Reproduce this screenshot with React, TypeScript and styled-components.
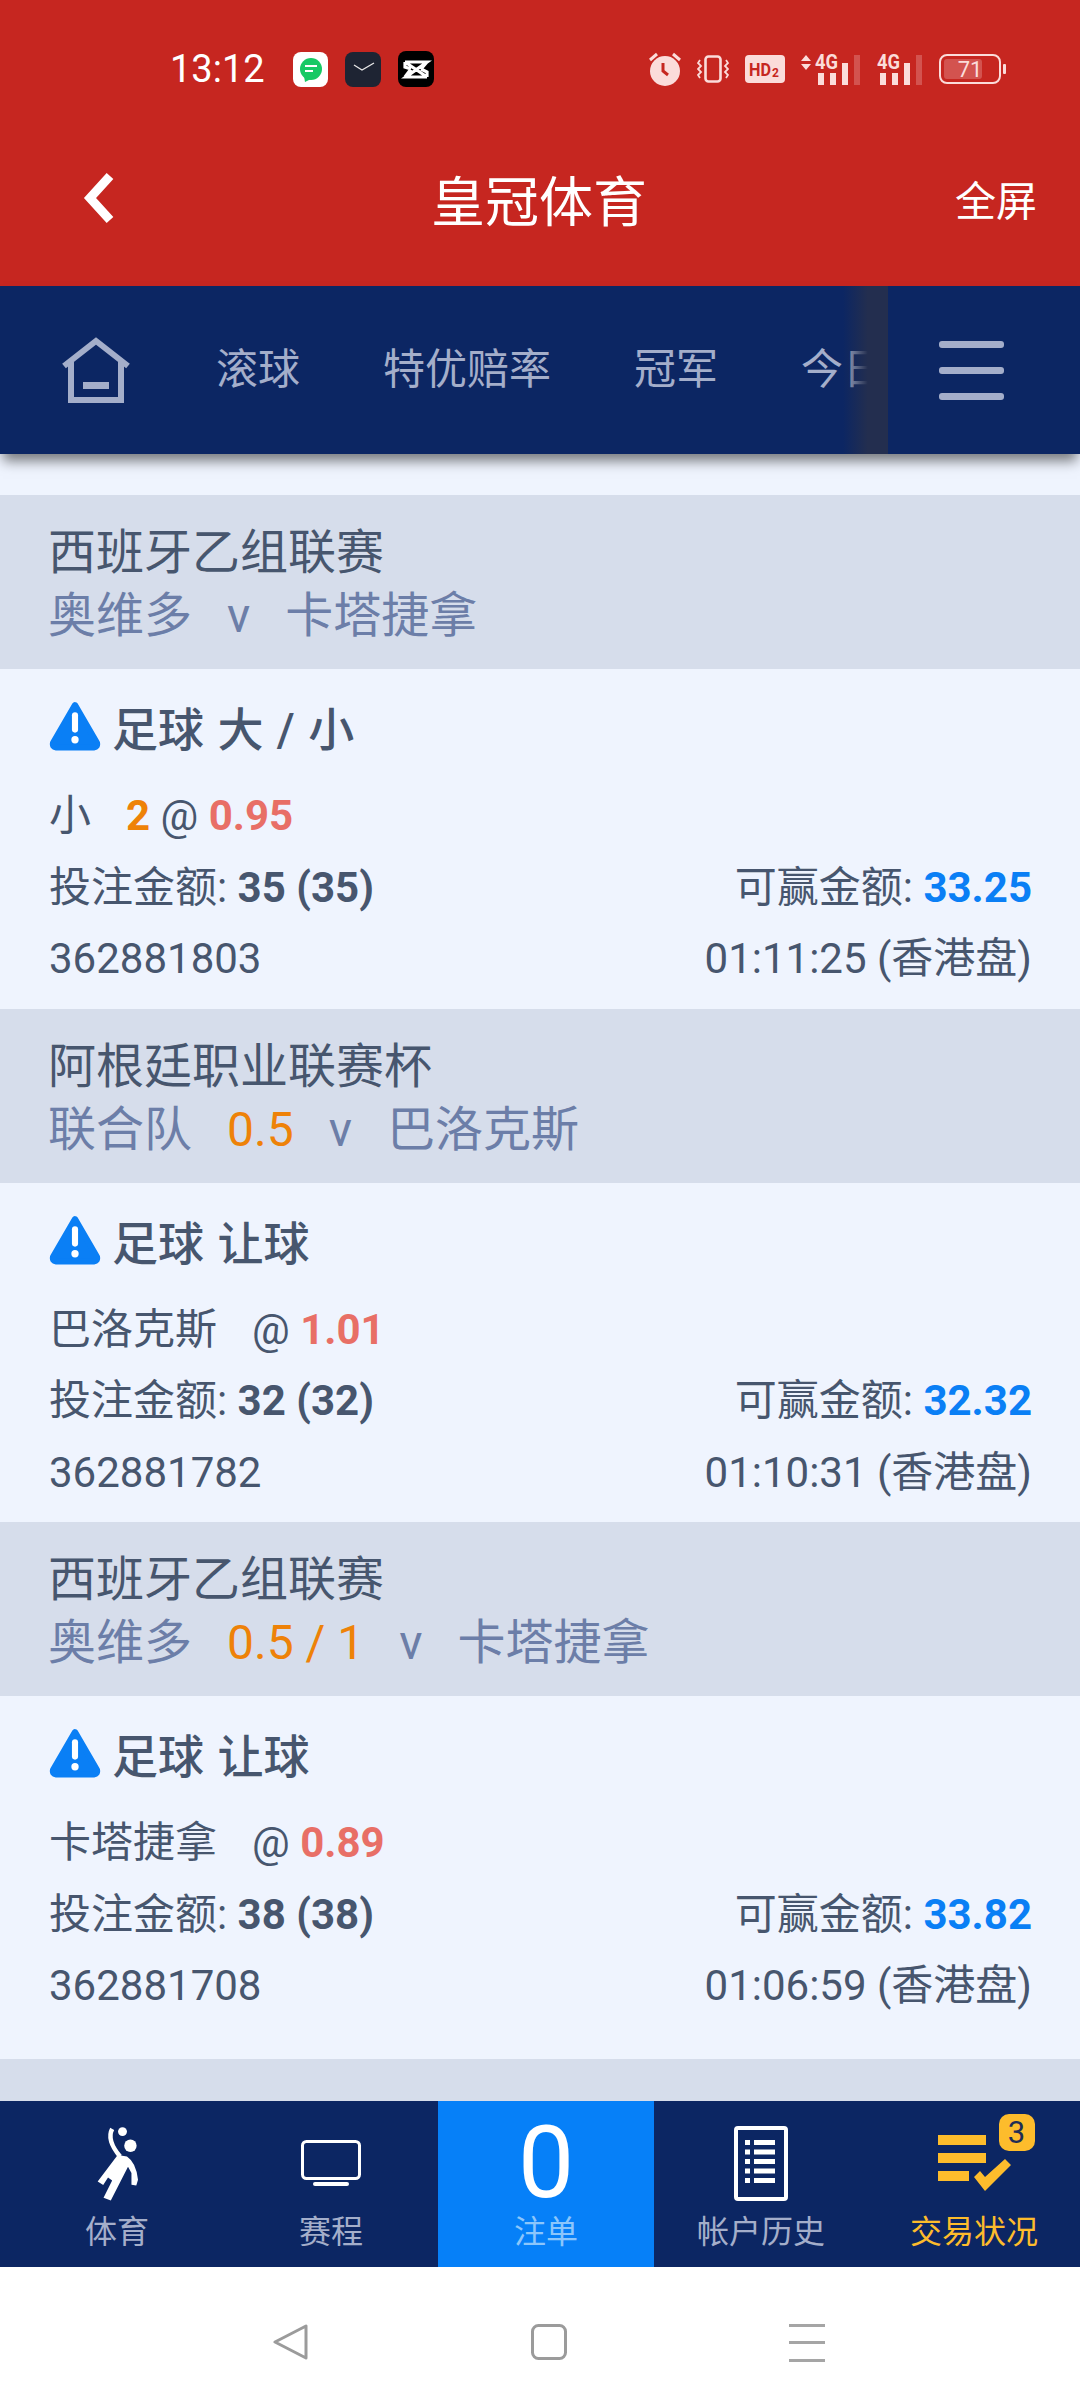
import React from 'react';
import styled, {createGlobalStyle} from 'styled-components';

const GlobalStyle = createGlobalStyle`
  html, body {
    margin: 0;
    padding: 0;
    background: #ffffff;
  }
  * {
    box-sizing: border-box;
  }
  body {
    font-family: Roboto, "Noto Sans CJK SC", sans-serif;
  }
`;

const Page = styled.div`
  width: 1080px;
  height: 2400px;
  display: flex;
  flex-direction: column;
  overflow: hidden;
  background: #eff4fe;
  color: #47566e;
`;

const RedTop = styled.div`
  height: 286px;
  background: #c62620;
  color: #ffffff;
  flex: none;
`;

const StatusBar = styled.div`
  height: 138px;
  display: flex;
  align-items: center;
  justify-content: space-between;
  padding: 0 74px 0 170px;
`;

const StatusGroup = styled.div`
  display: flex;
  align-items: center;
  gap: ${props => props.$gap}px;
`;

const Clock = styled.span`
  font-size: 38px;
  margin-right: 13px;
  width: 93px;
`;

const TitleRow = styled.div`
  height: 120px;
  display: flex;
  align-items: center;
  justify-content: space-between;
  padding: 0 43px 0 83px;
`;

const PageTitle = styled.div`
  flex: 1;
  text-align: center;
  font-size: 54px;
  margin-left: 8px;
`;

const FullScreen = styled.div`
  font-size: 41px;
`;

const NavBar = styled.div`
  height: 168px;
  background: #0c2663;
  display: flex;
  flex: none;
  position: relative;
  box-shadow: 0 10px 12px -3px rgba(0, 0, 0, 0.5);
`;

const NavScroller = styled.div`
  width: 888px;
  display: flex;
  align-items: center;
  overflow: hidden;
  position: relative;
  padding-left: 61px;
  white-space: nowrap;
  color: #a4aeca;
  font-size: 42px;

  &::after {
    content: '';
    position: absolute;
    top: 0;
    bottom: 0;
    right: 0;
    width: 45px;
    background: linear-gradient(to right, rgba(35, 46, 79, 0) 0%, #232e4f 55%);
  }
`;

const NavItem = styled.span`
  margin-right: 83px;
  flex: none;
  padding-bottom: 10px;
  &:first-of-type {
    margin-left: 85px;
  }
`;

const MenuButton = styled.div`
  flex: 1;
  display: flex;
  flex-direction: column;
  justify-content: center;
  gap: 19px;
  padding-left: 51px;
`;

const MenuBar = styled.span`
  display: block;
  width: 65px;
  height: 7px;
  border-radius: 3px;
  background: #a4aeca;
`;

const List = styled.div`
  flex: 1;
  margin-top: 41px;
  background: #d6ddeb;
  overflow: hidden;
`;

const MatchHeader = styled.div`
  padding: 26px 48px 22px;
  height: 174px;
  background: #d6ddeb;
`;

const League = styled.div`
  font-size: 48px;
  line-height: 63px;
  color: #47566e;
`;

const Teams = styled.div`
  display: flex;
  gap: 35px;
  font-size: 48px;
  line-height: 63px;
  color: #6c7ea8;
`;

const Handicap = styled.span`
  color: #ee8208;
`;

const Card = styled.div`
  background: #eff4fe;
  padding: 25px 48px ${props => (props.$last ? 37 : 14)}px 49px;
`;

const CardTitle = styled.div`
  display: flex;
  align-items: center;
  gap: 11px;
  height: 64px;
  font-size: 46px;
  font-weight: 500;
  word-spacing: 2px;
  margin-bottom: 22px;
`;

const Row = styled.div`
  display: flex;
  justify-content: space-between;
  font-size: 42px;
  line-height: 71.5px;
`;

const Selection = styled.span`
  margin-right: 35px;
`;

const HandicapBold = styled.b`
  color: #ee8208;
  font-weight: 700;
`;

const Odds = styled.b`
  color: #e86f66;
  font-weight: 700;
`;

const Win = styled.b`
  color: #0a7ff5;
  font-weight: 700;
`;

const TabBar = styled.div`
  height: 166px;
  flex: none;
  display: grid;
  grid-template-columns: 214px 214px 216px 214px 212px;
  padding-left: 10px;
  background: #0c2663;
`;

const Tab = styled.div`
  display: flex;
  flex-direction: column;
  align-items: center;
  padding-top: 18px;
  color: ${props => (props.$active ? '#fdbc2c' : '#a4aeca')};
  background: ${props => (props.$bet ? '#0680f8' : 'transparent')};
`;

const TabIcon = styled.div`
  height: 88px;
  display: flex;
  align-items: center;
  justify-content: center;
  position: relative;
`;

const BetCount = styled.div`
  font-size: 100px;
  line-height: 88px;
  color: #ffffff;
`;

const TabLabel = styled.div`
  font-size: 32px;
  line-height: 44px;
  padding-top: 3px;
  color: ${props => (props.$bet ? '#8cc6fb' : 'inherit')};
`;

const Badge = styled.span`
  position: absolute;
  top: -5px;
  left: 61px;
  width: 36px;
  height: 37px;
  border-radius: 10px;
  background: #fdbc2c;
  color: #1f2d55;
  font-size: 31px;
  line-height: 37px;
  text-align: center;
`;

const SystemNav = styled.div`
  height: 133px;
  flex: none;
  background: #ffffff;
  display: flex;
  justify-content: center;
  align-items: flex-start;
  gap: 222px;
  padding: 57px 0 0 18px;
`;

const AlertIcon = () => (
  <svg width="52" height="50" viewBox="0 0 51 49">
    <path d="M25.5 4 L47 41 Q48 45 44 45.5 L7 45.5 Q3 45 4 41 Z" fill="#0a7ff5" stroke="#0a7ff5" strokeWidth="6" strokeLinejoin="round" />
    <rect x="22.5" y="11" width="6" height="20" rx="3" fill="#ffffff" />
    <circle cx="25.5" cy="38" r="3.6" fill="#ffffff" />
  </svg>
);

const HomeIcon = () => (
  <svg width="70" height="66" viewBox="0 0 70 66" fill="none" style={{flex: 'none'}}>
    <path d="M3 29 L35 4 L67 29" stroke="#a4aeca" strokeWidth="6" />
    <path d="M10 25 V63 H60 V25" stroke="#a4aeca" strokeWidth="6" />
    <rect x="22" y="45" width="26" height="7" fill="#a4aeca" />
  </svg>
);

const MessageAppIcon = () => (
  <svg width="35" height="35" viewBox="0 0 35 35">
    <rect width="35" height="35" rx="8" fill="#ffffff" />
    <circle cx="18" cy="17" r="11" fill="#17c964" />
    <path d="M11 24 L12 30 L18 27 Z" fill="#17c964" />
    <rect x="12" y="13" width="12" height="2" fill="#ffffff" />
    <rect x="12" y="18" width="8" height="2" fill="#ffffff" />
  </svg>
);

const ClockAppIcon = () => (
  <svg width="36" height="35" viewBox="0 0 36 35">
    <rect width="36" height="35" rx="8" fill="#1e2433" />
    <path d="M9 13 L17 18 L29 11" fill="none" stroke="#e8e8e8" strokeWidth="1.3" />
  </svg>
);

const CapCutIcon = () => (
  <svg width="36" height="36" viewBox="0 0 36 36">
    <rect width="36" height="36" rx="8" fill="#000000" />
    <path d="M7 11 H29 L8 26 H29 M7 11 L29 26 M7 11 V16 L13 18 M29 26 V21 L23 18 M7 26 L13 18 M29 11 L23 18" fill="none" stroke="#ffffff" strokeWidth="3.2" />
  </svg>
);

const AlarmIcon = () => (
  <svg width="32" height="34" viewBox="0 0 32 34">
    <circle cx="16" cy="19" r="15" fill="#fbdcda" />
    <path d="M14 11 V19 L19 23" fill="none" stroke="#c62620" strokeWidth="3" />
    <path d="M1 8 L8 2 M31 8 L24 2" stroke="#fbdcda" strokeWidth="3" />
  </svg>
);

const VibrateIcon = () => (
  <svg width="32" height="28" viewBox="0 0 32 28" fill="none" stroke="#fbdcda">
    <rect x="8.5" y="1.5" width="15" height="25" rx="3" strokeWidth="2.6" />
    <path d="M3 5 L1 8 L4 11 L1 14 L4 17 L1 20 L3 23 M29 5 L31 8 L28 11 L31 14 L28 17 L31 20 L29 23" strokeWidth="1.8" />
  </svg>
);

const HdIcon = () => (
  <svg width="40" height="28" viewBox="0 0 40 28">
    <rect width="40" height="28" rx="4" fill="#fbdcda" />
    <text x="4" y="21" fontFamily="Roboto" fontWeight="700" fontSize="19" textLength="22" lengthAdjust="spacingAndGlyphs" fill="#c62620">HD</text>
    <text x="27" y="22" fontFamily="Roboto" fontWeight="700" fontSize="12" fill="#c62620">2</text>
  </svg>
);

const SignalIcon = ({arrows}: {arrows?: boolean}) => (
  <svg width={arrows ? 60 : 46} height="32" viewBox={arrows ? '0 0 60 32' : '14 0 46 32'}>
    {arrows && <path d="M5 2 L10 8 H0 Z M5 17 L0 11 H10 Z" fill="#fbdcda" />}
    <text x="14" y="16" fontFamily="Roboto" fontWeight="700" fontSize="20" textLength="23" lengthAdjust="spacingAndGlyphs" fill="#fbdcda">4G</text>
    <rect x="17" y="20" width="6" height="12" fill="#fbdcda" />
    <rect x="29" y="20" width="6" height="12" fill="#fbdcda" />
    <rect x="41" y="10" width="6" height="22" fill="#fbdcda" />
    <rect x="53" y="2" width="6" height="30" fill="#fbdcda" opacity="0.25" />
  </svg>
);

const BatteryIcon = () => (
  <svg width="67" height="30" viewBox="0 0 67 30">
    <rect x="1" y="1" width="60" height="28" rx="7" fill="none" stroke="#fbdcda" strokeWidth="2" />
    <rect x="5" y="5" width="38" height="20" rx="3" fill="#fbdcda" opacity="0.25" />
    <rect x="64" y="10" width="3" height="10" rx="1" fill="#fbdcda" />
    <text x="31" y="23" textAnchor="middle" fontFamily="Roboto" fontSize="22" fill="#fbdcda">71</text>
  </svg>
);

const BackIcon = () => (
  <svg width="32" height="52" viewBox="0 0 32 52">
    <path d="M27 4 L7 26 L27 48" fill="none" stroke="#ffffff" strokeWidth="9" />
  </svg>
);

const PlayerIcon = () => (
  <svg width="47" height="81" viewBox="270 125 135 235" fill="#ffffff">
    <circle cx="352" cy="150" r="13" />
    <circle cx="375" cy="191" r="18" />
    <path d="M322 142 Q305 175 345 222" fill="none" stroke="#ffffff" strokeWidth="13" />
    <path d="M338 218 L365 222 Q392 240 397 290 L392 306 L378 304 L378 270 L368 252 L318 350 L297 342 L322 292 L310 283 L296 305 L280 295 Z" />
  </svg>
);

const TvIcon = () => (
  <svg width="60" height="46" viewBox="0 0 60 46" fill="none">
    <rect x="1.5" y="1.5" width="57" height="37" rx="4" stroke="#ffffff" strokeWidth="3" />
    <rect x="12" y="42" width="36" height="4" rx="2" fill="#ffffff" />
  </svg>
);

const ListIcon = () => (
  <svg width="54" height="75" viewBox="0 0 54 75" fill="#ffffff">
    <rect x="2" y="2" width="50" height="71" rx="2" fill="none" stroke="#ffffff" strokeWidth="4" />
    {[14, 23.5, 33, 42.5, 52].map(y => (
      <React.Fragment key={y}>
        <rect x="11" y={y} width="5" height="5" />
        <rect x="20" y={y} width="21" height="5" />
      </React.Fragment>
    ))}
  </svg>
);

const StatusIcon = () => (
  <svg width="73" height="56" viewBox="0 0 73 56" fill="#fdbc2c">
    <rect y="0" width="48" height="10" />
    <rect y="18" width="48" height="10" />
    <rect y="36" width="31" height="10" />
    <path d="M36 42 L42 36 L47 42 L67 24 L73 30 L47 56 Z" />
  </svg>
);

const BackNavIcon = () => (
  <svg width="36" height="36" viewBox="0 0 36 36" fill="none">
    <path d="M2 18 L33 2 V34 Z" stroke="#9b9b9b" strokeWidth="3" strokeLinejoin="round" />
  </svg>
);

const HomeNavIcon = () => (
  <svg width="36" height="36" viewBox="0 0 36 36" fill="none">
    <rect x="1.5" y="1.5" width="33" height="33" rx="6" stroke="#9b9b9b" strokeWidth="3" />
  </svg>
);

const MenuNavIcon = () => (
  <svg width="36" height="38" viewBox="0 0 36 38" fill="#a5a5a5">
    <rect width="36" height="3" />
    <rect y="17" width="36" height="3" />
    <rect y="35" width="36" height="3" />
  </svg>
);

type Bet = {
  league: string;
  home: string;
  away: string;
  line?: string;
  market: string;
  selection: string;
  handicap?: string;
  odds: string;
  stake: number;
  win: string;
  id: string;
  time: string;
};

const BETS: Bet[] = [
  {
    league: '西班牙乙组联赛',
    home: '奥维多',
    away: '卡塔捷拿',
    market: '足球 大 / 小',
    selection: '小',
    handicap: '2',
    odds: '0.95',
    stake: 35,
    win: '33.25',
    id: '362881803',
    time: '01:11:25'
  },
  {
    league: '阿根廷职业联赛杯',
    home: '联合队',
    line: '0.5',
    away: '巴洛克斯',
    market: '足球 让球',
    selection: '巴洛克斯',
    odds: '1.01',
    stake: 32,
    win: '32.32',
    id: '362881782',
    time: '01:10:31'
  },
  {
    league: '西班牙乙组联赛',
    home: '奥维多',
    line: '0.5 / 1',
    away: '卡塔捷拿',
    market: '足球 让球',
    selection: '卡塔捷拿',
    odds: '0.89',
    stake: 38,
    win: '33.82',
    id: '362881708',
    time: '01:06:59'
  }
];

const App = () => (
  <Page>
    <GlobalStyle />
    <RedTop>
      <StatusBar>
        <StatusGroup $gap={17}>
          <Clock>13:12</Clock>
          <MessageAppIcon />
          <ClockAppIcon />
          <CapCutIcon />
        </StatusGroup>
        <StatusGroup $gap={16}>
          <AlarmIcon />
          <VibrateIcon />
          <HdIcon />
          <SignalIcon arrows />
          <SignalIcon />
          <BatteryIcon />
        </StatusGroup>
      </StatusBar>
      <TitleRow>
        <BackIcon />
        <PageTitle>皇冠体育</PageTitle>
        <FullScreen>全屏</FullScreen>
      </TitleRow>
    </RedTop>
    <NavBar>
      <NavScroller>
        <HomeIcon />
        <NavItem>滚球</NavItem>
        <NavItem>特优赔率</NavItem>
        <NavItem>冠军</NavItem>
        <NavItem>今日赛事</NavItem>
      </NavScroller>
      <MenuButton>
        <MenuBar />
        <MenuBar />
        <MenuBar />
      </MenuButton>
    </NavBar>
    <List>
      {BETS.map((bet, i) => (
        <React.Fragment key={bet.id}>
          <MatchHeader>
            <League>{bet.league}</League>
            <Teams>
              <span>{bet.home}</span>
              {bet.line && <Handicap>{bet.line}</Handicap>}
              <span>v</span>
              <span>{bet.away}</span>
            </Teams>
          </MatchHeader>
          <Card $last={i === BETS.length - 1}>
            <CardTitle>
              <AlertIcon />
              {bet.market}
            </CardTitle>
            <Row>
              <span>
                <Selection>{bet.selection}</Selection>
                {bet.handicap && <HandicapBold>{bet.handicap} </HandicapBold>}@ <Odds>{bet.odds}</Odds>
              </span>
            </Row>
            <Row>
              <span>
                投注金额: <b>{bet.stake} ({bet.stake})</b>
              </span>
              <span>
                可赢金额: <Win>{bet.win}</Win>
              </span>
            </Row>
            <Row>
              <span>{bet.id}</span>
              <span>{bet.time} (香港盘)</span>
            </Row>
          </Card>
        </React.Fragment>
      ))}
    </List>
    <TabBar>
      <Tab>
        <TabIcon>
          <PlayerIcon />
        </TabIcon>
        <TabLabel>体育</TabLabel>
      </Tab>
      <Tab>
        <TabIcon>
          <TvIcon />
        </TabIcon>
        <TabLabel>赛程</TabLabel>
      </Tab>
      <Tab $bet>
        <TabIcon>
          <BetCount>0</BetCount>
        </TabIcon>
        <TabLabel $bet>注单</TabLabel>
      </Tab>
      <Tab>
        <TabIcon>
          <ListIcon />
        </TabIcon>
        <TabLabel>帐户历史</TabLabel>
      </Tab>
      <Tab $active>
        <TabIcon>
          <StatusIcon />
          <Badge>3</Badge>
        </TabIcon>
        <TabLabel>交易状况</TabLabel>
      </Tab>
    </TabBar>
    <SystemNav>
      <BackNavIcon />
      <HomeNavIcon />
      <MenuNavIcon />
    </SystemNav>
  </Page>
);

export default App;
